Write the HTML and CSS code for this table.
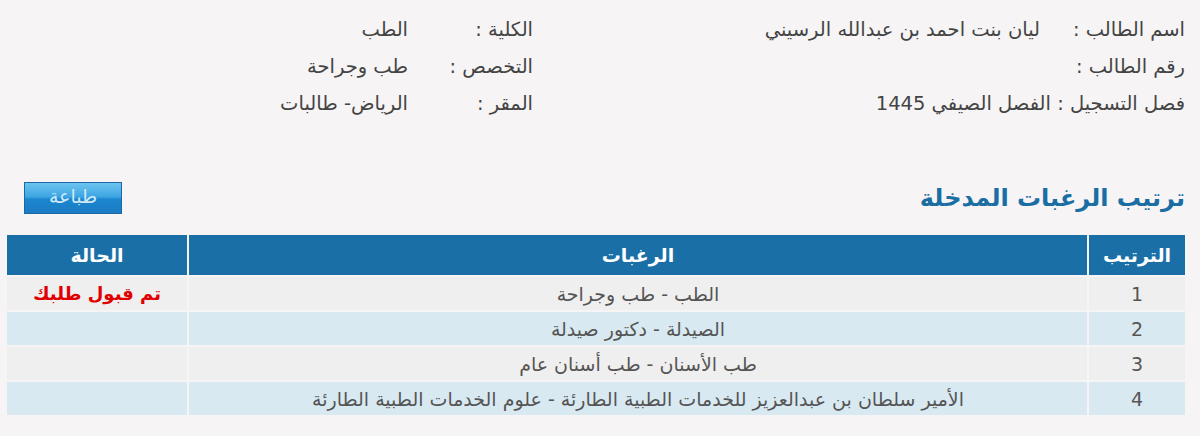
FILE: index.html
```html
<!DOCTYPE html>
<html lang="ar" dir="rtl">
<head>
<meta charset="utf-8">
<title>ترتيب الرغبات</title>
<link rel="stylesheet" href="styles.css">
</head>
<body>
<div class="page">
  <div class="info">
    <div class="lbl l1">اسم الطالب :</div>
    <div class="val v1">ليان بنت احمد بن عبدالله الرسيني</div>
    <div class="lbl l2">الكلية :</div>
    <div class="val v2">الطب</div>

    <div class="lbl l1">رقم الطالب :</div>
    <div class="val v1"></div>
    <div class="lbl l2">التخصص :</div>
    <div class="val v2">طب وجراحة</div>

    <div class="lbl l1 wide">فصل التسجيل : الفصل الصيفي 1445</div>
    <div class="lbl l2">المقر :</div>
    <div class="val v2">الرياض- طالبات</div>
  </div>

  <div class="title-row">
    <h2 class="title">ترتيب الرغبات المدخلة</h2>
    <button class="print-btn">طباعة</button>
  </div>

  <table class="wishes">
    <thead>
      <tr>
        <th class="c-order">الترتيب</th>
        <th class="c-wish">الرغبات</th>
        <th class="c-status">الحالة</th>
      </tr>
    </thead>
    <tbody>
      <tr class="odd">
        <td class="c-order">1</td>
        <td class="c-wish">الطب - طب وجراحة</td>
        <td class="c-status accepted">تم قبول طلبك</td>
      </tr>
      <tr class="even">
        <td class="c-order">2</td>
        <td class="c-wish">الصيدلة - دكتور صيدلة</td>
        <td class="c-status"></td>
      </tr>
      <tr class="odd">
        <td class="c-order">3</td>
        <td class="c-wish">طب الأسنان - طب أسنان عام</td>
        <td class="c-status"></td>
      </tr>
      <tr class="even">
        <td class="c-order">4</td>
        <td class="c-wish">الأمير سلطان بن عبدالعزيز للخدمات الطبية الطارئة - علوم الخدمات الطبية الطارئة</td>
        <td class="c-status"></td>
      </tr>
    </tbody>
  </table>
</div>
</body>
</html>
```

FILE: styles.css
```css
html, body {
  margin: 0;
  padding: 0;
  background: #f6f4f5;
}
body {
  font-family: "DejaVu Sans", "Noto Sans", sans-serif;
  color: #444;
  direction: rtl;
}
.page {
  padding: 11px 15px 0 5px;
}
.info {
  display: grid;
  grid-template-columns: 145px 507px 125px 1fr;
  grid-auto-rows: 37px;
  align-items: center;
  font-size: 19.5px;
  color: #444;
}
.lbl, .val {
  white-space: nowrap;
}
.wide {
  grid-column: 1 / span 2;
}
.title-row {
  display: flex;
  justify-content: space-between;
  align-items: center;
  margin-top: 60px;
  padding-left: 19px;
  height: 32px;
}
.title {
  margin: 0;
  font-size: 24px;
  font-weight: bold;
  color: #1a6ea3;
}
.print-btn {
  width: 98px;
  height: 32px;
  border: 1px solid #1d67a6;
  background: linear-gradient(#6cc4f0 0%, #3fa6e2 45%, #1b86cf 55%, #1a7cc4 100%);
  color: #cfe8f8;
  font-family: "DejaVu Sans", sans-serif;
  font-size: 19px;
  padding: 0 0 5px;
  cursor: pointer;
}
.wishes {
  margin-top: 19px;
  width: 1182px;
  border-collapse: separate;
  border-spacing: 2px;
  margin-right: -2px;
  font-size: 19px;
}
.wishes th {
  background: #1a70a6;
  color: #fff;
  font-weight: bold;
  height: 40px;
  padding: 0;
  text-align: center;
}
.wishes td {
  height: 33px;
  padding: 0;
  text-align: center;
  color: #555;
}
.c-order { width: 96px; }
.c-status { width: 180px; }
.odd td { background: #f0efef; }
.even td { background: #d9e9f2; }
.wishes td.accepted {
  color: #e00000;
  font-weight: bold;
  font-size: 18px;
}
```
